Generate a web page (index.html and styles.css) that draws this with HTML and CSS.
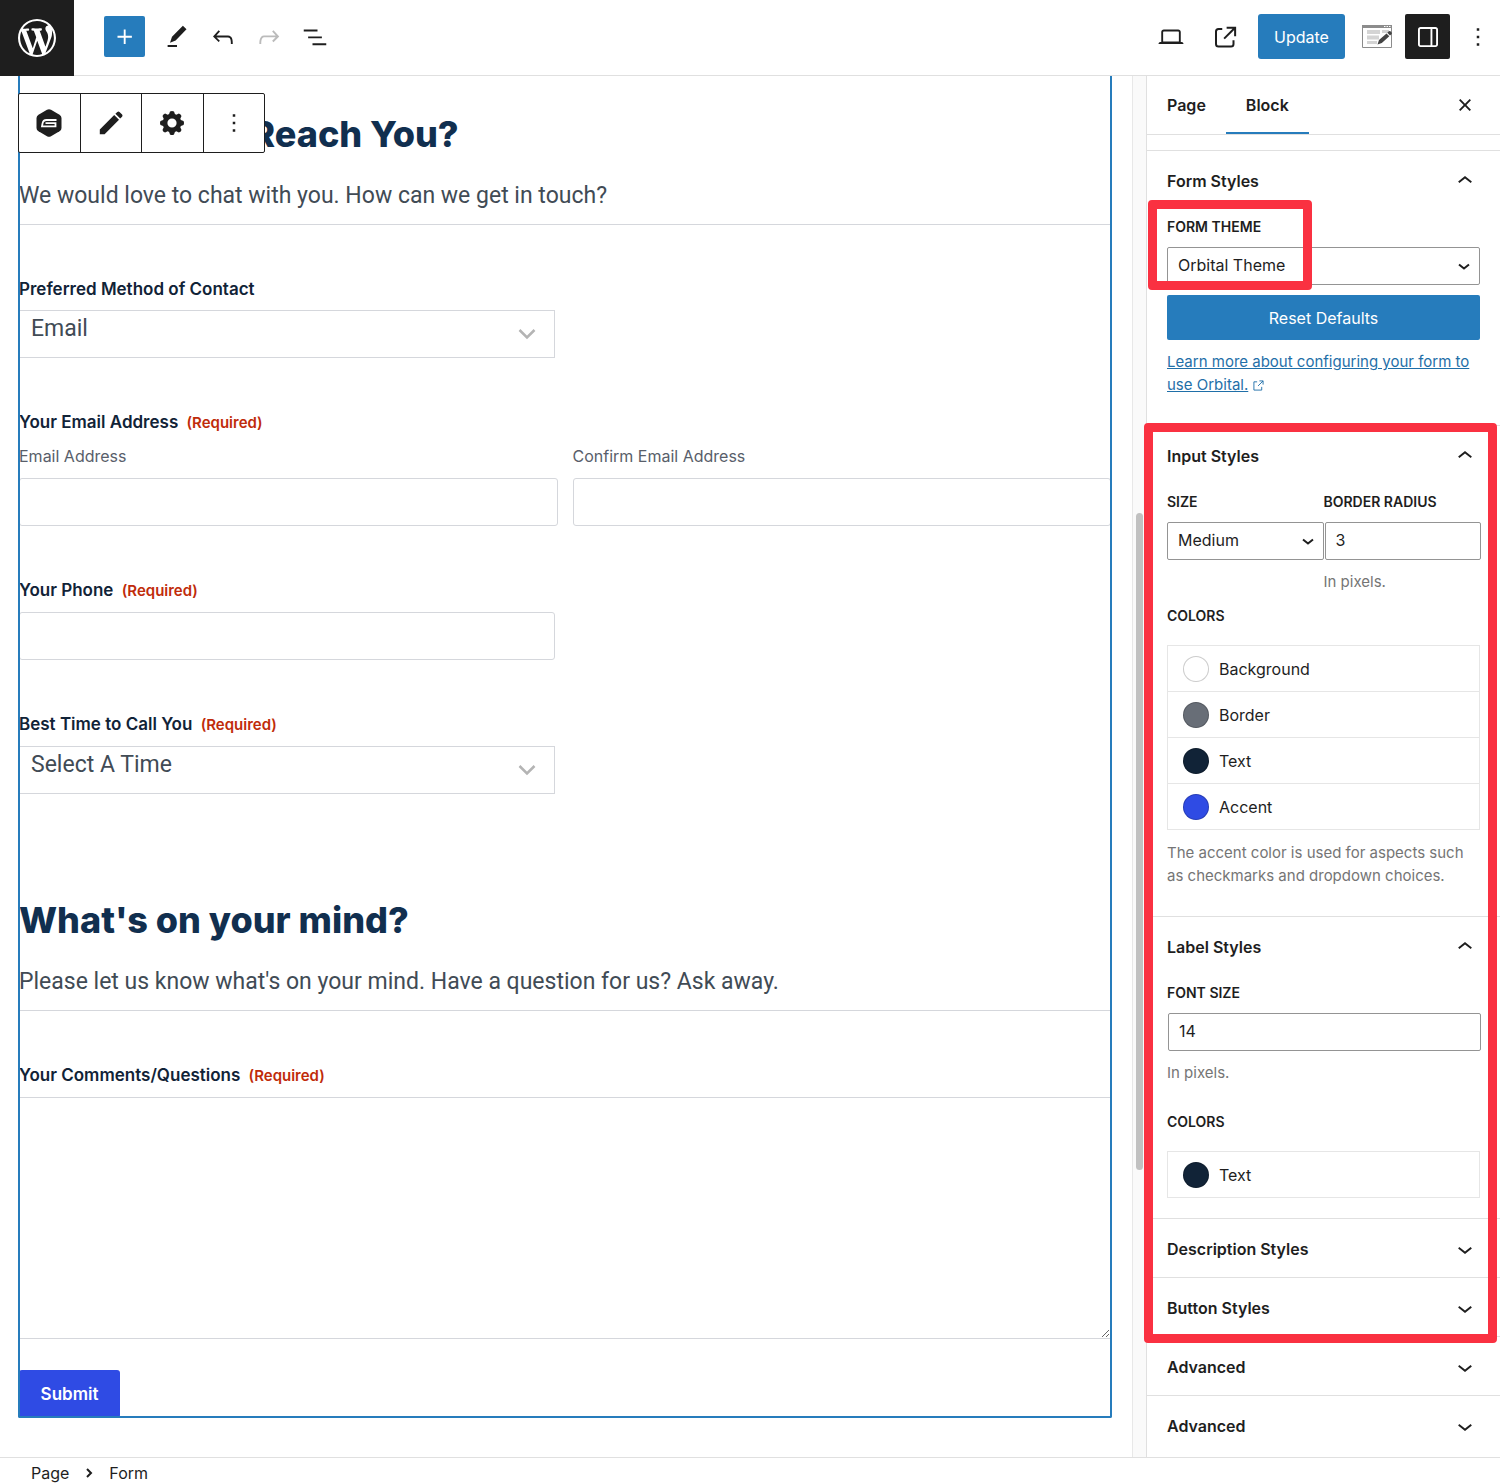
FILE: index.html
```html
<!DOCTYPE html>
<html lang="en">
<head>
    <meta charset="UTF-8">
    <meta name="viewport" content="width=device-width, initial-scale=1.0">
    <title>Edit Page</title>
    <link rel="stylesheet" href="styles.css">
</head>
<body>
    <header class="header">
        <a class="wp-logo" href="#" aria-label="View Pages">
            <svg viewBox="0 0 20 20" width="38" height="38"><path d="M20 10c0-5.51-4.49-10-10-10C4.48 0 0 4.49 0 10c0 5.52 4.48 10 10 10 5.51 0 10-4.48 10-10zM7.78 15.37L4.37 6.22c.55-.02 1.17-.08 1.17-.08.5-.06.44-1.13-.06-1.11 0 0-1.45.11-2.37.11-.18 0-.37 0-.58-.01C4.12 2.69 6.87 1.11 10 1.11c2.33 0 4.45.87 6.05 2.34-.68-.11-1.65.39-1.65 1.58 0 .74.45 1.36.9 2.1.35.61.55 1.36.55 2.46 0 1.49-1.4 5-1.4 5l-3.03-8.37c.54-.02.82-.17.82-.17.5-.05.44-1.25-.06-1.22 0 0-1.44.12-2.38.12-.87 0-2.33-.12-2.33-.12-.5-.03-.56 1.2-.06 1.22l.92.08 1.26 3.41zM17.41 10c.24-.64.74-1.87.43-4.25.7 1.29 1.05 2.71 1.05 4.25 0 3.29-1.73 6.24-4.4 7.78.97-2.59 1.94-5.2 2.92-7.78zM6.1 18.09C3.12 16.65 1.11 13.53 1.11 10c0-1.3.23-2.48.72-3.59C3.25 10.3 4.67 14.2 6.1 18.09zm4.03-6.63l2.58 6.98c-.86.29-1.76.45-2.71.45-.79 0-1.57-.11-2.29-.33.81-2.38 1.62-4.74 2.42-7.1z"/></svg>
        </a>
        <div class="header-tools">
            <button type="button" class="tool add" aria-label="Add block">
                <svg class="icon" viewBox="0 0 24 24"><path d="M11 12.5V17.5H12.5V12.5H17.5V11H12.5V6H11V11H6V12.5H11Z"/></svg>
            </button>
            <button type="button" class="tool" aria-label="Tools">
                <svg class="icon" viewBox="0 0 24 24"><path d="M19.600 5.800L16.700 3 8 11.700l-1.600 4.800 4.500-1.700zM4.500 20h7.500v-1.600H4.500z"/></svg>
            </button>
            <button type="button" class="tool" aria-label="Undo">
                <svg class="icon" viewBox="0 0 24 24"><path d="M18.3 11.7c-.6-.6-1.4-.9-2.3-.9H6.7l2.9-3.3-1.1-1-4.5 5L8.5 16l1-1-2.7-2.7H16c.5 0 .9.2 1.3.5 1 1 1 3.4 1 4.5v.3h1.5v-.2c0-1.5 0-4.3-1.5-5.7z"/></svg>
            </button>
            <button type="button" class="tool disabled" aria-label="Redo">
                <svg class="icon" viewBox="0 0 24 24"><path d="M15.6 6.5l-1.1 1 2.9 3.3H8c-.9 0-1.7.3-2.3.9-1.4 1.5-1.4 4.2-1.4 5.6v.2h1.5v-.3c0-1.1 0-3.5 1-4.5.3-.3.7-.5 1.3-.5h9.2L14.5 15l1.1 1.1 4.6-4.6-4.6-5z"/></svg>
            </button>
            <button type="button" class="tool" aria-label="Document Overview">
                <svg class="icon" viewBox="0 0 24 24"><path d="M3 6h11v1.5H3V6Zm3.5 5.5h11V13h-11v-1.5ZM21 17H10v1.5h11V17Z"/></svg>
            </button>
        </div>
        <div class="header-settings">
            <button type="button" class="tool" aria-label="Preview">
                <svg class="icon" viewBox="0 0 24 24"><path d="M20.5 16h-.7V8c0-1.1-.9-2-2-2H6.2c-1.1 0-2 .9-2 2v8h-.7c-.8 0-1.5.7-1.5 1.5h20c0-.8-.7-1.5-1.5-1.5zM5.7 8c0-.3.2-.5.5-.5h11.6c.3 0 .5.2.5.5v7.6H5.7V8z"/></svg>
            </button>
            <button type="button" class="tool" aria-label="View Page">
                <svg class="icon" viewBox="0 0 24 24" fill="none" stroke="currentColor" stroke-width="1.6"><path d="M9 5.500H6A2 2 0 0 0 4 7.500v10A2 2 0 0 0 6 19.500h10a2 2 0 0 0 2-2V14.500M12.500 4.500h6.800v6.800M19 4.800L10.500 13.300"/></svg>
            </button>
            <button type="button" class="update">Update</button>
            <button type="button" class="template" aria-label="Template">
                <svg viewBox="0 0 30 23" width="30" height="23"><path fill="#fff" stroke="#8c8c8c" d="M.5.5h29v22H.5z"/><path fill="#8c8c8c" d="M0 0h30v3H0z"/><path fill="#fff" d="M22 1h1.5v1H22zM24.5 1H26v1h-1.5zM27 1h1.5v1H27z"/><path fill="#d4d4d4" d="M5 5h13v4H5zM5 10.5h12v4H5zM5 16h10v3H5zM20 5h7v3h-7z"/><path fill="#444" d="M15.5 19.5l1.5-4.5 7.5-6.5 2.8 2.8-7.5 6.7zM25.3 7.7l1.6-1.5q1-.7 1.9.3l.8.9q.7 1-.2 1.8l-1.4 1.3z"/></svg>
            </button>
            <button type="button" class="tool active" aria-label="Settings">
                <svg class="icon" viewBox="0 0 24 24"><path d="M18 4H6c-1.1 0-2 .9-2 2v12c0 1.1.9 2 2 2h12c1.1 0 2-.9 2-2V6c0-1.1-.9-2-2-2zm-4 14.5H6c-.3 0-.5-.2-.5-.5V6c0-.3.2-.5.5-.5h8v13zm4.5-.5c0 .3-.2.5-.5.5h-2.5v-13H18c.3 0 .5.2.5.5v12z"/></svg>
            </button>
            <button type="button" class="dots" aria-label="Options">
                <svg class="icon" viewBox="0 0 24 24"><path d="M13 19h-2v-2h2v2zm0-6h-2v-2h2v2zm0-6h-2V5h2v2z"/></svg>
            </button>
        </div>
    </header>

    <div class="editor">
        <main class="canvas">
            <form class="form-block">
                <div class="block-toolbar">
                    <button type="button" aria-label="Gravity Forms">
                        <svg viewBox="0 0 26 28" width="26" height="28"><path d="M11 .8q2-1.1 4 0l8.5 4.9q2 1.2 2 3.4v9.800q0 2.200-2 3.400L15 27.200q-2 1.100-4 0l-8.500-4.900q-2-1.200-2-3.400V9.100q0-2.200 2-3.400z"/><path fill="none" stroke="#fff" stroke-width="1.8" d="M20.500 11h-10q-3.400 0-4 3.600l-.5 2.800h13.500v-3.200H9.500"/></svg>
                    </button>
                    <button type="button" aria-label="Edit Form">
                        <svg viewBox="0 0 24 24" width="24" height="24"><path d="M.8 23.200V18.400L15.200 4l4.800 4.800L5.600 23.200zM16.400 2.800L18.300.9q1.100-.9 2.200 0l2.600 2.600q.9 1.100 0 2.200l-1.900 1.900z"/></svg>
                    </button>
                    <button type="button" aria-label="Form Settings">
                        <svg viewBox="0 0 24 24" width="24" height="24"><path fill-rule="evenodd" d="M10 .5q2-1 4 0l.9 2.600 1.400.6L18.900 2.500q2 .7 2.600 2.600l-1.200 2.600.6 1.400 2.600.9q1 2 0 4l-2.600.9-.6 1.400 1.200 2.600q-.6 2-2.600 2.600l-2.600-1.200-1.400.6-.9 2.600q-2 1-4 0l-.9-2.600-1.400-.6-2.600 1.200q-2-.6-2.600-2.600l1.200-2.600-.6-1.400L.5 14q-1-2 0-4l2.600-.9.6-1.400L2.500 5.100q.6-2 2.600-2.600l2.600 1.200 1.400-.6zM12 7.400a4.600 4.600 0 1 0 0 9.200 4.600 4.600 0 0 0 0-9.200z"/></svg>
                    </button>
                    <button type="button" aria-label="More options">
                        <svg class="icon" viewBox="0 0 24 24"><path d="M13 19h-2v-2h2v2zm0-6h-2v-2h2v2zm0-6h-2V5h2v2z"/></svg>
                    </button>
                </div>

                <div class="section">
                    <h2>How Can We Reach You?</h2>
                    <p>We would love to chat with you. How can we get in touch?</p>
                </div>

                <div class="field half">
                    <label for="contactMethod">Preferred Method of Contact</label>
                    <div class="select-wrap">
                        <select id="contactMethod">
                            <option>Email</option>
                            <option>Phone</option>
                        </select>
                        <svg viewBox="0 0 18 12" width="18" height="12"><path d="M1.5 2L9 9.5 16.5 2"/></svg>
                    </div>
                </div>

                <fieldset class="field">
                    <legend>Your Email Address <span class="required">(Required)</span></legend>
                    <div class="email-row">
                        <div>
                            <label class="sub-label" for="email">Email Address</label>
                            <input type="email" id="email">
                        </div>
                        <div>
                            <label class="sub-label" for="confirmEmail">Confirm Email Address</label>
                            <input type="email" id="confirmEmail">
                        </div>
                    </div>
                </fieldset>

                <div class="field half">
                    <label for="phone">Your Phone <span class="required">(Required)</span></label>
                    <input type="tel" id="phone">
                </div>

                <div class="field half">
                    <label for="callTime">Best Time to Call You <span class="required">(Required)</span></label>
                    <div class="select-wrap">
                        <select id="callTime">
                            <option>Select A Time</option>
                            <option>Morning</option>
                            <option>Afternoon</option>
                        </select>
                        <svg viewBox="0 0 18 12" width="18" height="12"><path d="M1.5 2L9 9.5 16.5 2"/></svg>
                    </div>
                </div>

                <div class="section spaced">
                    <h2>What's on your mind?</h2>
                    <p>Please let us know what's on your mind. Have a question for us? Ask away.</p>
                </div>

                <div class="field">
                    <label for="comments">Your Comments/Questions <span class="required">(Required)</span></label>
                    <textarea id="comments"></textarea>
                </div>

                <button type="button" class="submit">Submit</button>
            </form>
        </main>

        <div class="scrollbar"><div class="thumb"></div></div>

        <aside class="sidebar">
            <div class="tabs">
                <button type="button" class="tab">Page</button>
                <button type="button" class="tab selected">Block</button>
                <button type="button" class="close" aria-label="Close Settings">
                    <svg class="icon" viewBox="0 0 24 24"><path d="M12 13.06l3.712 3.713 1.061-1.06L13.061 12l3.712-3.712-1.06-1.06L12 10.938 8.288 7.227l-1.061 1.06L10.939 12l-3.712 3.712 1.06 1.061L12 13.061z"/></svg>
                </button>
            </div>

            <section class="panel first">
                <button type="button" class="panel-title">Form Styles
                    <svg class="icon" viewBox="0 0 24 24"><path d="M6.5 12.4L12 8l5.5 4.4-.9 1.2L12 10l-4.5 3.6-1-1.2z"/></svg>
                </button>
                <div class="panel-body">
                    <div class="control marked">
                        <label for="formTheme">Form Theme</label>
                        <div class="select-wrap">
                            <select id="formTheme">
                                <option>Orbital Theme</option>
                                <option>Gravity Forms 2.5 Theme</option>
                            </select>
                            <svg viewBox="0 0 12 8" width="12" height="8"><path d="M1 1.5l5 4 5-4"/></svg>
                        </div>
                        <div class="highlight highlight-theme"></div>
                    </div>
                    <button type="button" class="reset">Reset Defaults</button>
                    <a class="learn-more" href="#">Learn more about configuring your form to use Orbital.</a>
                    <svg class="external" viewBox="0 0 12 12" width="11" height="11"><path d="M4.5 2H1v9h8.5V7.5M7 1h4v4M11 1L5.5 6.5"/></svg>
                </div>
            </section>

            <div class="style-panels">
                <section class="panel">
                    <button type="button" class="panel-title">Input Styles
                        <svg class="icon" viewBox="0 0 24 24"><path d="M6.5 12.4L12 8l5.5 4.4-.9 1.2L12 10l-4.5 3.6-1-1.2z"/></svg>
                    </button>
                    <div class="panel-body">
                        <div class="control-row">
                            <div class="control">
                                <label for="inputSize">Size</label>
                                <div class="select-wrap">
                                    <select id="inputSize">
                                        <option>Small</option>
                                        <option selected>Medium</option>
                                        <option>Large</option>
                                    </select>
                                    <svg viewBox="0 0 12 8" width="12" height="8"><path d="M1 1.5l5 4 5-4"/></svg>
                                </div>
                            </div>
                            <div class="control">
                                <label for="borderRadius">Border Radius</label>
                                <input type="text" id="borderRadius" value="3">
                                <p class="help">In pixels.</p>
                            </div>
                        </div>
                        <h3>Colors</h3>
                        <ul class="colors">
                            <li><button type="button"><span class="swatch white"></span>Background</button></li>
                            <li><button type="button"><span class="swatch gray"></span>Border</button></li>
                            <li><button type="button"><span class="swatch navy"></span>Text</button></li>
                            <li><button type="button"><span class="swatch blue"></span>Accent</button></li>
                        </ul>
                        <p class="help">The accent color is used for aspects such as checkmarks and dropdown choices.</p>
                    </div>
                </section>

                <section class="panel">
                    <button type="button" class="panel-title">Label Styles
                        <svg class="icon" viewBox="0 0 24 24"><path d="M6.5 12.4L12 8l5.5 4.4-.9 1.2L12 10l-4.5 3.6-1-1.2z"/></svg>
                    </button>
                    <div class="panel-body short">
                        <div class="control">
                            <label for="fontSize">Font Size</label>
                            <input type="text" id="fontSize" value="14">
                            <p class="help">In pixels.</p>
                        </div>
                        <h3>Colors</h3>
                        <ul class="colors">
                            <li><button type="button"><span class="swatch navy"></span>Text</button></li>
                        </ul>
                    </div>
                </section>

                <section class="panel">
                    <button type="button" class="panel-title">Description Styles
                        <svg class="icon" viewBox="0 0 24 24"><path d="M17.5 11.6L12 16l-5.5-4.4.9-1.2L12 14l4.5-3.6 1 1.2z"/></svg>
                    </button>
                </section>
                <section class="panel">
                    <button type="button" class="panel-title">Button Styles
                        <svg class="icon" viewBox="0 0 24 24"><path d="M17.5 11.6L12 16l-5.5-4.4.9-1.2L12 14l4.5-3.6 1 1.2z"/></svg>
                    </button>
                </section>
                <div class="highlight highlight-styles"></div>
            </div>

            <section class="panel">
                <button type="button" class="panel-title">Advanced
                    <svg class="icon" viewBox="0 0 24 24"><path d="M17.5 11.6L12 16l-5.5-4.4.9-1.2L12 14l4.5-3.6 1 1.2z"/></svg>
                </button>
            </section>
            <section class="panel">
                <button type="button" class="panel-title">Advanced
                    <svg class="icon" viewBox="0 0 24 24"><path d="M17.5 11.6L12 16l-5.5-4.4.9-1.2L12 14l4.5-3.6 1 1.2z"/></svg>
                </button>
            </section>
        </aside>
    </div>

    <footer class="breadcrumb">
        <a href="#">Page</a>
        <svg viewBox="0 0 8 12" width="8" height="12"><path d="M2 2l4 4-4 4"/></svg>
        <a href="#">Form</a>
    </footer>
</body>
</html>
```
FILE: styles.css
```css
* {
    box-sizing: border-box;
}
body {
    margin: 0;
    min-height: 100vh;
    display: flex;
    flex-direction: column;
    font-family: Inter, "Liberation Sans", sans-serif;
    font-size: 16px;
    color: #1e1e1e;
    background-color: #fff;
}
button, input, select, textarea {
    font: inherit;
    color: inherit;
}
button {
    padding: 0;
    border: 0;
    background: none;
}
svg {
    display: block;
    fill: currentColor;
}
svg[fill="none"] {
    fill: none;
}
.icon {
    width: 30px;
    height: 30px;
}

/* header */
.header {
    display: flex;
    align-items: center;
    height: 76px;
    border-bottom: 1px solid #e0e0e0;
}
.wp-logo {
    display: flex;
    align-items: center;
    justify-content: center;
    width: 74px;
    height: 76px;
    color: #fff;
    background-color: #1e1e1e;
}
.header-tools, .header-settings {
    display: flex;
    align-items: center;
    padding-bottom: 2px;
}
.header-tools {
    gap: 5px;
    margin-left: 30px;
}
.header-settings {
    gap: 10px;
    margin-left: auto;
    padding-right: 7px;
}
.tool {
    display: flex;
    align-items: center;
    justify-content: center;
    width: 41px;
    height: 41px;
    border-radius: 2px;
}
.header-settings .tool {
    width: 45px;
    height: 45px;
}
.add {
    margin-right: 6px;
    color: #fff;
    background-color: #267cbc;
}
.disabled {
    color: #bbb;
}
.header-settings .active {
    color: #fff;
    background-color: #1e1e1e;
}
.update {
    width: 87px;
    height: 45px;
    border-radius: 3px;
    color: #fff;
    background-color: #267cbc;
}
.template {
    margin: 0 3px 0 7px;
}
.dots {
    margin-left: 3px;
}

/* editor */
.editor {
    flex: 1;
    display: flex;
}
.canvas {
    flex: 1;
    padding: 0 20px 39px 18px;
}
.form-block {
    position: relative;
    padding: 36px 1px 0;
}
.form-block::after {
    content: "";
    position: absolute;
    inset: 0;
    border: 2px solid #267cbc;
    border-top: 0;
    border-radius: 0 0 2px 2px;
    pointer-events: none;
}
.block-toolbar {
    position: absolute;
    top: 17px;
    left: 0;
    z-index: 1;
    display: flex;
    width: 247px;
    border: 1px solid #1e1e1e;
    border-radius: 2px;
    background-color: #fff;
}
.block-toolbar button {
    flex: 1;
    display: flex;
    align-items: center;
    justify-content: center;
    height: 58px;
    border-right: 1px solid #1e1e1e;
}
.block-toolbar button:last-child {
    border-right: 0;
}
.section {
    padding-bottom: 12px;
    border-bottom: 1px solid #d5d7dc;
}
.section.spaced {
    margin-top: 104px;
}
.section h2 {
    margin: 0 0 24px;
    font-size: 36px;
    line-height: 44px;
    font-weight: 800;
    color: #112f4f;
}
.section p {
    margin: 0;
    font-family: Roboto, "Liberation Sans", sans-serif;
    font-size: 23px;
    line-height: 32px;
    color: #414b55;
}
.field {
    margin: 54px 0 0;
    padding: 0;
    border: 0;
}
.field > label, .field legend {
    display: block;
    margin-bottom: 11px;
    padding: 0;
    font-size: 17px;
    line-height: 20px;
    font-weight: 600;
    color: #112337;
}
.field legend {
    margin-bottom: 13px;
}
.required {
    margin-left: 4px;
    font-size: 15px;
    color: #c02b0a;
}
.field input, .field select, .field textarea {
    display: block;
    width: 100%;
    height: 48px;
    padding: 0 11px;
    border: 1px solid #d5d7dc;
    border-radius: 3px;
    background-color: #fff;
}
.half > input, .half > .select-wrap {
    width: calc(50% - 10px);
}
.field select {
    padding-bottom: 12px;
    border-radius: 0;
    font-family: Roboto, "Liberation Sans", sans-serif;
    font-size: 23px;
    color: #414b55;
    appearance: none;
}
.field textarea {
    height: 242px;
    border-radius: 0;
}
.select-wrap {
    position: relative;
}
.select-wrap svg {
    position: absolute;
    top: 18px;
    right: 19px;
    fill: none;
    stroke: #b4b4b4;
    stroke-width: 2.5;
    pointer-events: none;
}
.email-row {
    display: grid;
    grid-template-columns: 1fr 1fr;
    gap: 15px;
}
.sub-label {
    display: block;
    margin-bottom: 12px;
    font-size: 16px;
    line-height: 20px;
    color: #585e6a;
}
.submit {
    display: block;
    margin-top: 31px;
    width: 101px;
    height: 48px;
    border-radius: 3px;
    font-size: 17px;
    font-weight: 600;
    color: #fff;
    background-color: #2f4be4;
}
.scrollbar {
    width: 14px;
    padding: 437px 3px 0;
    border-left: 1px solid #e8e8e8;
    background-color: #fafafa;
}
.thumb {
    height: 657px;
    border-radius: 4px;
    background-color: #c1c1c1;
}

/* sidebar */
.sidebar {
    width: 354px;
    border-left: 1px solid #e0e0e0;
}
.tabs {
    display: flex;
    height: 59px;
    border-bottom: 1px solid #e0e0e0;
}
.tab {
    padding: 0 20px;
    font-weight: 600;
}
.tab.selected {
    box-shadow: inset 0 -2px #267cbc;
}
.close {
    margin-left: auto;
    padding-right: 20px;
}
.panel {
    border-top: 1px solid #e0e0e0;
}
.panel.first {
    margin-top: 15px;
}
.panel-title {
    display: flex;
    align-items: center;
    justify-content: space-between;
    width: 100%;
    height: 58px;
    padding: 2px 20px 0;
    font-weight: 600;
    text-align: left;
}
.panel-body {
    padding: 8px 20px 29px;
}
.panel-body.short {
    padding-bottom: 20px;
}
.control label, .panel-body h3 {
    display: block;
    margin: 0 0 10px;
    font-size: 14px;
    line-height: 20px;
    font-weight: 600;
    text-transform: uppercase;
}
.panel-body h3 {
    margin: 13px 0 19px;
}
.short h3 {
    margin-top: 28px;
}
.control select, .control input {
    display: block;
    width: 100%;
    height: 38px;
    padding: 0 10px 2px;
    border: 1px solid #949494;
    border-radius: 2px;
    background-color: #fff;
    appearance: none;
}
.control input {
    margin-left: 1px;
}
.control .select-wrap svg {
    top: 16px;
    right: 10px;
    stroke: #1e1e1e;
    stroke-width: 2;
}
.control-row {
    display: grid;
    grid-template-columns: 1fr 1fr;
}
.reset {
    display: block;
    width: 100%;
    height: 45px;
    margin: 10px 0;
    border-radius: 2px;
    color: #fff;
    background-color: #267cbc;
}
.learn-more {
    font-size: 15px;
    line-height: 23px;
    color: #1f6fa8;
}
.external {
    display: inline;
    fill: none;
    stroke: #1f6fa8;
    vertical-align: -1px;
}
.help {
    margin: 10px 0 0;
    font-size: 15px;
    line-height: 23px;
    color: #757575;
}
.colors {
    margin: 0;
    padding: 0;
    list-style: none;
    border: 1px solid #e6e6e6;
    border-bottom: 0;
}
.colors + .help {
    margin-top: 11px;
}
.colors button {
    display: flex;
    align-items: center;
    gap: 10px;
    width: 100%;
    height: 46px;
    padding: 0 15px;
    border-bottom: 1px solid #e6e6e6;
}
.swatch {
    width: 26px;
    height: 26px;
    border: 1px solid rgba(0, 0, 0, 0.2);
    border-radius: 50%;
}
.white {
    background-color: #fff;
}
.gray {
    background-color: #686e77;
}
.navy {
    background-color: #112337;
}
.blue {
    background-color: #2f4be4;
}

/* red boxes around the settings to look at */
.marked, .style-panels {
    position: relative;
}
.highlight {
    position: absolute;
    border: 9px solid #fa3141;
    border-radius: 4px;
    pointer-events: none;
}
.highlight-theme {
    top: -17px;
    left: -19px;
    width: 164px;
    height: 90px;
}
.highlight-styles {
    inset: -2px 3px -7px -3px;
}

.breadcrumb {
    display: flex;
    align-items: center;
    gap: 16px;
    height: 27px;
    padding: 4px 31px 0;
    border-top: 1px solid #e0e0e0;
}
.breadcrumb a {
    color: inherit;
    text-decoration: none;
}
.breadcrumb svg {
    fill: none;
    stroke: currentColor;
    stroke-width: 2;
}
```
